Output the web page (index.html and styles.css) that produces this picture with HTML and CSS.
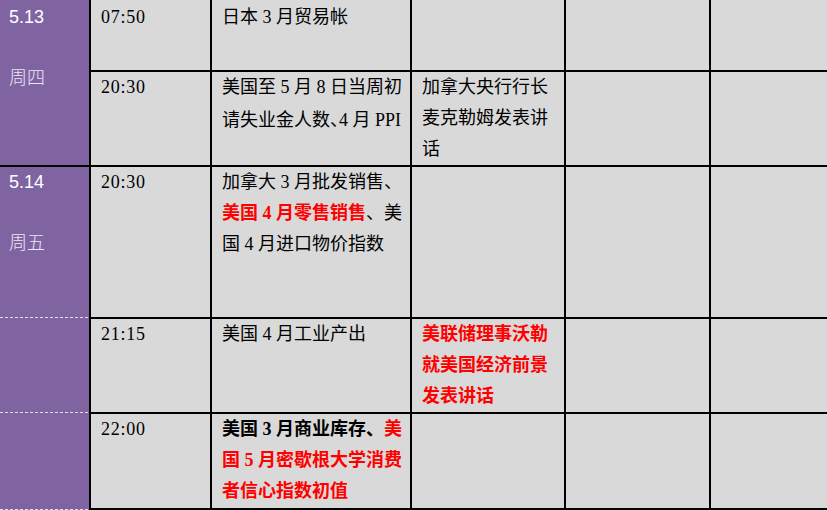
FILE: index.html
```html
<!DOCTYPE html>
<html lang="zh-CN">
<head>
<meta charset="utf-8">
<title>财经日历</title>
<link rel="stylesheet" href="styles.css">
</head>
<body>
<div class="cal">
  <div class="date date-a top">
    <div class="day">5.13</div>
    <div class="week">周四</div>
  </div>
  <div class="cell top time">07:50</div>
  <div class="cell top">日本 3 月贸易帐</div>
  <div class="cell top"></div>
  <div class="cell top"></div>
  <div class="cell top last"></div>

  <div class="cell time">20:30</div>
  <div class="cell">美国至 5 月 8 日当周初<br>请失业金人数<span class="tight">、</span>4 月 PPI</div>
  <div class="cell">加拿大央行行长<br>麦克勒姆发表讲<br>话</div>
  <div class="cell"></div>
  <div class="cell last"></div>

  <div class="date date-b">
    <div class="day">5.14</div>
    <div class="week">周五</div>
  </div>
  <div class="cell time">20:30</div>
  <div class="cell">加拿大 3 月批发销售、<br><span class="hot">美国 4 月零售销售</span>、美<br>国 4 月进口物价指数</div>
  <div class="cell"></div>
  <div class="cell"></div>
  <div class="cell last"></div>

  <div class="date date-b"></div>
  <div class="cell time">21:15</div>
  <div class="cell">美国 4 月工业产出</div>
  <div class="cell"><span class="hot">美联储理事沃勒<br>就美国经济前景<br>发表讲话</span></div>
  <div class="cell"></div>
  <div class="cell last"></div>

  <div class="date date-c"></div>
  <div class="cell time">22:00</div>
  <div class="cell"><b class="strong">美国 3 月商业库存、</b><span class="hot">美<br>国 5 月密歇根大学消费<br>者信心指数初值</span></div>
  <div class="cell"></div>
  <div class="cell"></div>
  <div class="cell last"></div>
</div>
</body>
</html>
```

FILE: styles.css
```css
html, body {
  margin: 0;
  padding: 0;
  background: #d9d9d9;
  overflow: hidden;
}

.cal {
  width: 827px;
  height: 510px;
  display: grid;
  grid-template-columns: 91px 121px 200px 154px 145px 116px;
  grid-template-rows: 72px 95px 152px 95px 96px;
  font-family: "Liberation Serif", "Noto Sans CJK SC", serif;
  font-size: 18px;
  line-height: 31px;
  color: #000;
}

.cell {
  box-sizing: border-box;
  background: #d9d9d9;
  border-right: 2px solid #000;
  border-bottom: 2px solid #000;
  padding: 0 0 0 10px;
  white-space: nowrap;
}

.cell.last {
  border-right: 0;
}

.cell.top {
  padding-top: 2px;
}

.time {
  letter-spacing: 0.75px;
}

.tight {
  font-family: "Noto Sans CJK SC", sans-serif;
  font-feature-settings: "halt" 1;
}

.hot {
  color: #ff0000;
  font-weight: bold;
}

.strong {
  font-weight: bold;
}

.date {
  box-sizing: border-box;
  background-color: #8064a2;
  border-right: 2px solid #000;
  padding: 0 0 0 9px;
}

.date-a {
  grid-row: 1 / span 2;
  border-bottom: 2px solid #000;
  padding-top: 2px;
}

.date-b {
  background-image: repeating-linear-gradient(90deg, #e6def0 0 3px, transparent 3px 5px);
  background-repeat: no-repeat;
  background-size: 100% 1px;
  background-position: left 0 bottom 1px;
}

.date-c {
  background-image: repeating-linear-gradient(90deg, #e6def0 0 3px, transparent 3px 5px);
  background-repeat: no-repeat;
  background-size: 100% 1px;
  background-position: left 0 bottom 0;
}

.day {
  font-family: "Liberation Sans", Arial, sans-serif;
  color: #ffffff;
}

.week {
  margin-top: 28px;
  color: #ece6f4;
  font-family: "Noto Sans CJK SC", sans-serif;
  font-weight: 300;
}
```
